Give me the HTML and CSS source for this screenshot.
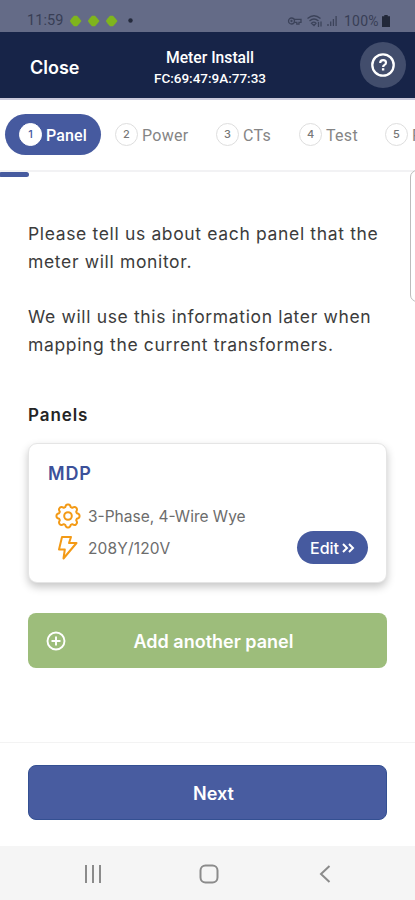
FILE: index.html
```html
<!DOCTYPE html>
<html lang="en">
<head>
<meta charset="utf-8">
<title>Meter Install</title>
<link rel="stylesheet" href="styles.css">
</head>
<body>
<div class="phone">
  <div class="status">
    <span class="clock">11:59</span>
    <svg class="notes" width="66" height="14" viewBox="0 0 66 14">
      <g fill="#7fb51d"><path d="M.8 7 2.500 4.500 5 1.800h3L10.500 4.500 12.500 7l-2 2.500L8 12.200H5L2.500 9.500z"/><path d="M18.800 7l1.700-2.500L23 1.800h3l2.500 2.700 2 2.500-2 2.500-2.500 2.700h-3l-2.500-2.700z"/><path d="M36.800 7l1.700-2.500L41 1.800h3l2.500 2.700 2 2.500-2 2.500-2.500 2.700h-3l-2.500-2.700z"/></g>
      <circle cx="61.500" cy="6.500" r="2.200" fill="#242a3c"/>
    </svg>
    <svg class="signals" width="53" height="14" viewBox="0 0 53 14" fill="none" stroke="#3c435a" stroke-width="1.300">
      <circle cx="4.500" cy="7" r="3"/><circle cx="4.500" cy="7" r=".5"/><path d="M7 5.300h7v3h-2v1.800H9.800V8.300H7.300"/>
      <path d="M20.500 4.500Q27-1 33.500 4.500M22.500 7Q27 3 31.500 7M24.500 9.300Q27 7 29 9.300L27 11.500zM31.500 8v5M34 7.500v5"/>
      <path d="M41 12v-2M43.700 12V7.500M46.400 12V5M49.100 12V2"/>
    </svg>
    <span class="charge">100%</span>
    <svg class="battery" width="8" height="12" viewBox="0 0 8 12"><path d="M2.300 0h3.400v1.200H8V12H0V1.200h2.300z" fill="#222839"/></svg>
  </div>
  <header class="header">
    <span class="close">Close</span>
    <div class="titles"><div class="title">Meter Install</div><div class="mac">FC:69:47:9A:77:33</div></div>
    <div class="help">
      <svg width="26" height="26" viewBox="0 0 26 26" fill="none" stroke="#fff"><circle cx="13" cy="13" r="10.700" stroke-width="2.300"/><path d="M10.200 11q0-2.800 2.900-2.800t2.900 2.500q0 1.400-1.500 2.200-1.400.7-1.400 2" stroke-width="2.200"/><path d="M13.100 16.200v2.300" stroke-width="2.400"/></svg>
    </div>
  </header>
  <nav class="tabs">
    <div class="tab active"><span class="num">1</span><span class="label">Panel</span></div>
    <div class="tab power"><span class="num">2</span><span class="label">Power</span></div>
    <div class="tab cts"><span class="num">3</span><span class="label">CTs</span></div>
    <div class="tab test"><span class="num">4</span><span class="label">Test</span></div>
    <div class="tab last"><span class="num">5</span><span class="label">Review</span></div>
  </nav>
  <main class="main">
    <div class="progress"></div>
    <div class="edge"></div>
    <p class="copy">Please tell us about each panel that the<br>meter will monitor.</p>
    <p class="copy">We will use this information later when<br>mapping the current transformers.</p>
    <h2 class="heading">Panels</h2>
    <section class="card">
      <h3 class="name">MDP</h3>
      <div class="details">
        <div class="specs">
          <div class="spec">
            <svg width="26" height="26" viewBox="-13 -13 26 26" fill="none" stroke="#f39a16" stroke-width="2" stroke-linejoin="round"><path d="M-2.800-8.800C-2-12-.8-11.500 0-11.500S2-12 2.800-8.800L4.200-8.200C7-9.800 7.500-9 8.200-8.200S9.800-7 8.200-4.200L8.800-2.800C12-2 11.500-.8 11.500 0S12 2 8.800 2.800L8.200 4.200C9.800 7 9 7.500 8.200 8.200S7 9.800 4.200 8.200L2.800 8.800C2 12 .8 11.500 0 11.500S-2 12-2.800 8.800L-4.200 8.200C-7 9.800-7.500 9-8.200 8.200S-9.800 7-8.200 4.200L-8.800 2.800C-12 2-11.500.8-11.500 0S-12-2-8.800-2.800L-8.200-4.200C-9.800-7-9-7.500-8.200-8.200S-7-9.800-4.200-8.200Z"/><circle r="3.800"/></svg>
            <span>3-Phase, 4-Wire Wye</span>
          </div>
          <div class="spec volt">
            <svg width="26" height="26" viewBox="0 0 26 26" fill="none" stroke="#f39a16" stroke-width="2" stroke-linejoin="round"><path d="M7 2H16L14 8H21.500L8.500 23.500 9.800 14.500H4Z"/></svg>
            <span>208Y/120V</span>
          </div>
        </div>
        <div class="edit"><span>Edit</span><svg width="13" height="10" viewBox="0 0 13 10" fill="none" stroke="#fff" stroke-width="2"><path d="m1 1 4 4-4 4M7 1l4 4-4 4"/></svg></div>
      </div>
    </section>
    <div class="button add">
      <svg class="plus" width="20" height="20" viewBox="0 0 20 20" fill="none" stroke="#fff" stroke-width="1.900"><circle cx="10" cy="10" r="8.500"/><path d="M10 5.500v9M5.500 10h9"/></svg>
      <span>Add another panel</span>
    </div>
  </main>
  <footer class="footer"><div class="button next"><span>Next</span></div></footer>
  <div class="sysnav">
    <svg width="18" height="18" viewBox="0 0 18 18" stroke="#8b8b8b" stroke-width="2"><path d="M2 0v18M9 0v18M16 0v18"/></svg>
    <svg class="home" width="20" height="20" viewBox="0 0 20 20" fill="none" stroke="#8b8b8b" stroke-width="2"><rect x="1.500" y="1.500" width="17" height="17" rx="5"/></svg>
    <svg width="12" height="18" viewBox="0 0 12 18" fill="none" stroke="#8b8b8b" stroke-width="2"><path d="m10.500 1-8.500 8 8.500 8"/></svg>
  </div>
</div>
</body>
</html>
```
FILE: styles.css
```css
* { box-sizing: border-box; }
body { margin: 0; background: #fff; font-family: Inter, sans-serif; }
svg { display: block; flex: none; }
.phone { width: 415px; height: 900px; display: flex; flex-direction: column; overflow: hidden; }
.status { height: 32px; flex: none; background: #646b87; color: #383e55; font: 14.5px/16px Roboto, sans-serif; display: flex; align-items: center; padding: 9px 0 0 27px; white-space: nowrap; }
.clock { width: 42px; letter-spacing: .1px; }
.signals { margin-left: 152px; }
.charge { margin-left: 4px; width: 37px; font-size: 14px; letter-spacing: .2px; }
.battery { margin-left: 1px; }
.header { height: 68px; flex: none; background: #172448; border-bottom: 2px solid #c9c9db; color: #fff; display: flex; align-items: center; padding: 5px 9px 0 30px; }
.close { width: 120px; font-weight: 600; font-size: 18px; }
.titles { width: 120px; text-align: center; font: 500 16px/20px Roboto, sans-serif; white-space: nowrap; }
.title { font-size: 15.7px; }
.mac { font-size: 13.5px; }
.help { width: 46px; height: 46px; margin: -5px 0 0 auto; border-radius: 50%; background: #424d6c; display: grid; place-items: center; }
.tabs { height: 70px; flex: none; display: flex; align-items: flex-start; padding: 14px 0 0 5px; overflow: hidden; font: 16px/22px Roboto, sans-serif; color: #858585; }
.tab { height: 41px; flex: none; display: flex; align-items: center; letter-spacing: .3px; }
.tab .num { width: 23px; height: 23px; border: 1px solid #dedede; border-radius: 50%; font: 500 11px/21px Inter, sans-serif; text-align: center; color: #777; letter-spacing: 0; }
.label { margin: 2px 0 0 4px; }
.active { width: 96px; border-radius: 21px; background: #465a9f; color: #fff; padding-left: 14px; }
.active .num { background: #fff; border-color: #fff; color: #465a9f; }
.active .label { font-weight: 500; letter-spacing: .1px; }
.power { width: 101px; padding-left: 14px; }
.cts { width: 83px; padding-left: 14px; }
.test { width: 86px; padding-left: 14px; }
.last { padding-left: 14px; }
.main { position: relative; height: 572px; flex: none; border-top: 2px solid #f2f2f4; padding: 0 28px; }
.progress { width: 30px; height: 5px; margin: 0 0 43px -29px; border-radius: 3px; background: #465a9f; }
.edge { position: absolute; top: -2px; left: 410px; width: 20px; height: 132px; border: 1px solid #bcbcbc; border-radius: 7px; background: #fff; }
.copy { margin: 0 0 27px; font-size: 17.5px; line-height: 28px; color: #3c3c3c; white-space: nowrap; letter-spacing: .65px; }
.heading { margin: 42px 0 14px; font-size: 17px; line-height: 28px; font-weight: 600; color: #252525; letter-spacing: .9px; }
.card { height: 140px; border: 1px solid #e5e5e5; border-radius: 9px; background: #fff; box-shadow: 0 4px 9px #0000003a; padding: 16px 18px 0 19px; }
.name { margin: 0 0 12px; font-size: 18px; line-height: 28px; font-weight: 600; color: #3c519a; letter-spacing: .8px; }
.details { display: flex; justify-content: space-between; align-items: flex-end; }
.specs { padding-left: 7px; }
.spec { height: 32px; display: flex; align-items: center; gap: 7px; color: #6c6c6c; font-size: 15.5px; white-space: nowrap; }
.volt { letter-spacing: .15px; }
.edit { width: 71px; height: 33px; border-radius: 17px; background: #465a9f; color: #fff; display: flex; align-items: center; justify-content: center; gap: 3px; font-size: 16px; font-weight: 500; }
.button { position: relative; height: 55px; border-radius: 8px; color: #fff; font-size: 18px; font-weight: 600; display: flex; align-items: center; justify-content: center; }
.add { margin-top: 30px; background: #9dbd7b; padding: 2px 0 0 12px; }
.plus { position: absolute; left: 18px; top: 18px; }
.footer { height: 104px; flex: none; border-top: 1px solid #f3f3f3; padding: 22px 28px 0; }
.next { background: #485ca0; border: 1px solid #345092; padding: 2px 0 0 12px; }
.sysnav { height: 54px; flex: none; background: #f5f5f5; display: flex; align-items: center; justify-content: space-between; padding: 1px 84px 0; }
.home { margin-right: 4px; }
```
